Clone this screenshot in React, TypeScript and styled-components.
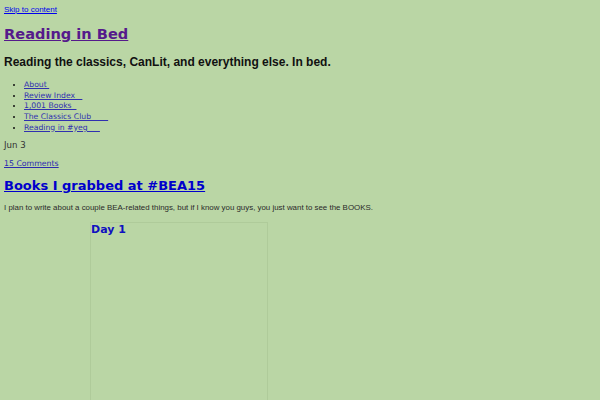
import React from 'react'
import styled, {createGlobalStyle} from 'styled-components'

const GlobalStyle = createGlobalStyle`
	html, body {
		margin: 0;
		padding: 0;
		background: #bad6a5;
	}
	body {
		font-family: 'Liberation Sans', Arial, sans-serif;
		color: #222;
	}
	a {
		color: #0000ee;
	}
`

const Page = styled.div`
	padding: 4px 4px 0 4px;
	height: 396px;
	overflow: hidden;
`

const SkipLink = styled.a`
	display: block;
	font-size: 8px;
	line-height: 11px;
	color: #0000ee;
`

const SiteHeader = styled.header`
	margin-top: 9px;
`

const SiteTitle = styled.h1`
	margin: 0;
	font-family: 'DejaVu Sans', sans-serif;
	font-size: 14.6px;
	font-weight: bold;
	line-height: 20px;
	a {
		color: #551a8b;
	}
`

const SiteTagline = styled.p`
	margin: 10px 0 0 0;
	font-family: 'Liberation Sans', Arial, sans-serif;
	font-size: 12px;
	font-weight: bold;
	line-height: 16px;
	color: #111;
`

const NavList = styled.ul`
	margin: 10px 0 0 0;
	padding-left: 20px;
	font-family: 'DejaVu Sans', sans-serif;
	font-size: 7.7px;
	line-height: 10.7px;
	li::marker {
		color: #111;
	}
	a {
		color: #3030b0;
	}
`

const PostDate = styled.div`
	margin-top: 5px;
	font-family: 'DejaVu Sans', sans-serif;
	font-size: 8.6px;
	line-height: 13px;
	color: #333;
`

const CommentsLink = styled.a`
	display: block;
	margin-top: 6px;
	font-family: 'DejaVu Sans', sans-serif;
	font-size: 7.8px;
	line-height: 11px;
	color: #2a2ab0;
`

const PostTitle = styled.h2`
	margin: 8.5px 0 0 0;
	font-family: 'DejaVu Sans', sans-serif;
	font-size: 13px;
	font-weight: bold;
	line-height: 18px;
	a {
		color: #0000cc;
	}
`

const PostIntro = styled.p`
	margin: 6.5px 0 0 0;
	font-size: 7.9px;
	line-height: 11px;
	color: #2a2a2a;
`

const Gallery = styled.section`
	margin: 9.5px 0 0 86px;
	width: 176px;
	height: 200px;
	border: 1px solid #afcb9a;
	border-bottom: none;
`

const GalleryHeading = styled.h3`
	margin: 0;
	font-family: 'DejaVu Sans', sans-serif;
	font-size: 11px;
	font-weight: bold;
	line-height: 14px;
	color: #1010c0;
`

const navItems = [
	'About\u00a0',
	'Review Index\u00a0\u00a0\u00a0',
	'1,001 Books\u00a0\u00a0',
	'The Classics Club\u00a0\u00a0\u00a0\u00a0\u00a0\u00a0\u00a0',
	'Reading in #yeg\u00a0\u00a0\u00a0\u00a0\u00a0',
]

export default function App() {
	return (
		<Page>
			<GlobalStyle />
			<SkipLink href="#content">Skip to content</SkipLink>
			<SiteHeader>
				<SiteTitle><a href="#home">Reading in Bed</a></SiteTitle>
				<SiteTagline>Reading the classics, CanLit, and everything else. In bed.</SiteTagline>
				<NavList>
					{navItems.map(item => (
						<li key={item}><a href="#nav">{item}</a></li>
					))}
				</NavList>
			</SiteHeader>
			<main id="content">
				<PostDate>Jun 3</PostDate>
				<CommentsLink href="#comments">15 Comments</CommentsLink>
				<PostTitle><a href="#post">Books I grabbed at #BEA15</a></PostTitle>
				<PostIntro>I plan to write about a couple BEA-related things, but if I know you guys, you just want to see the BOOKS.</PostIntro>
				<Gallery>
					<GalleryHeading>Day 1</GalleryHeading>
				</Gallery>
			</main>
		</Page>
	)
}
